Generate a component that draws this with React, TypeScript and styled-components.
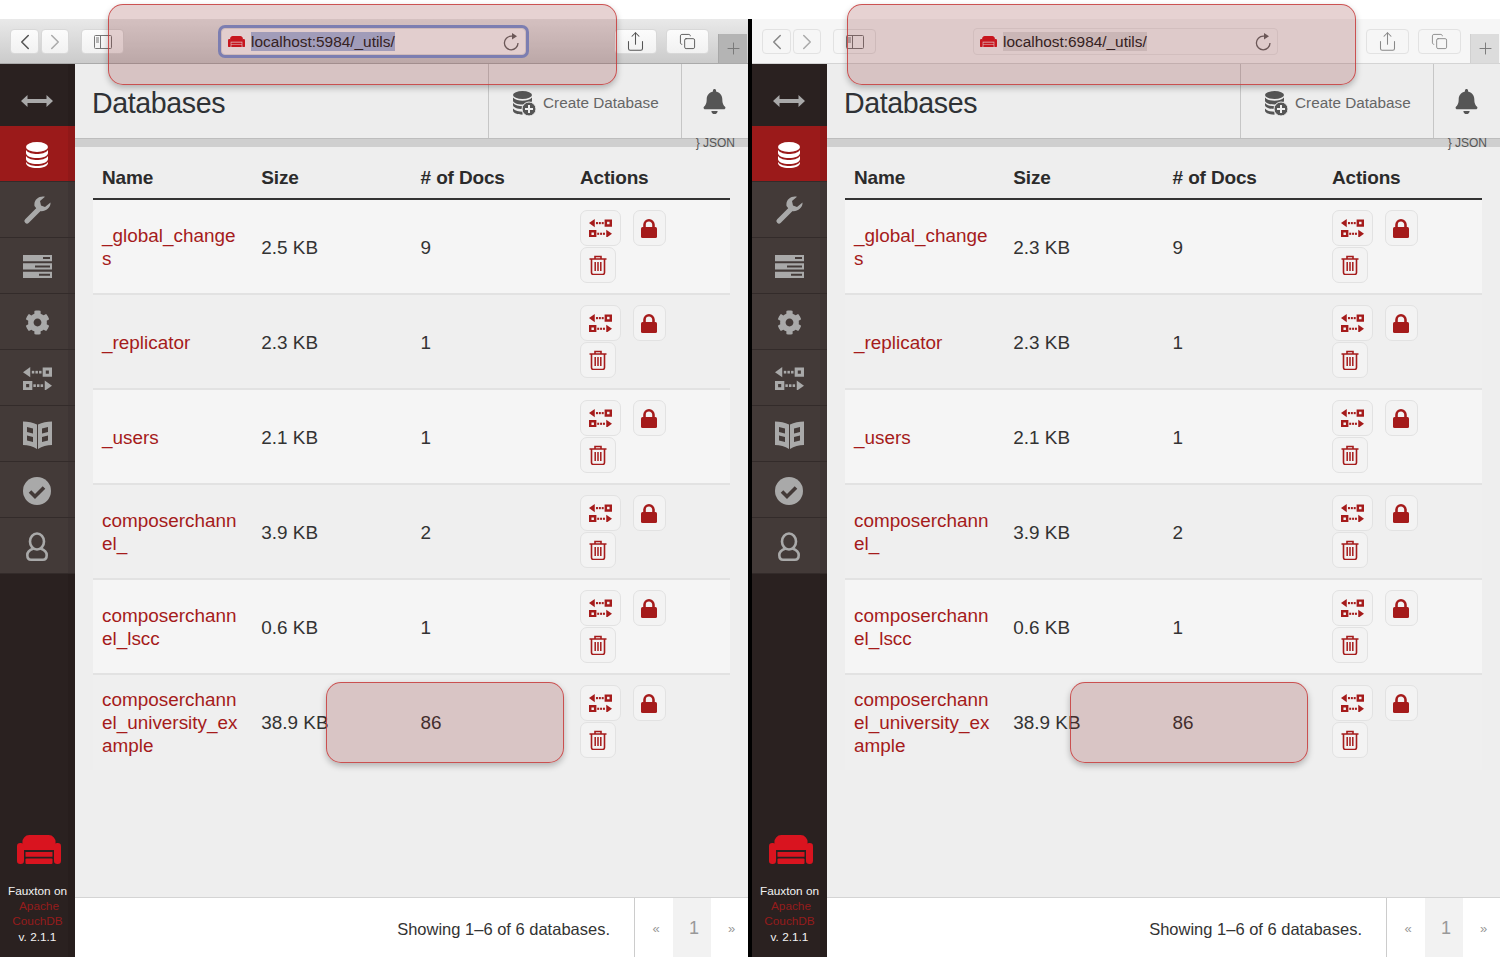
import styled, { createGlobalStyle } from 'styled-components';
import { ChevronLeft, ChevronRight, Copy, Plus, Share } from 'lucide-react';
import { FaBell, FaCog } from 'react-icons/fa';

const GlobalStyle = createGlobalStyle`
  html, body {
    margin: 0;
    background: #fff;
    font-family: "Liberation Sans", Arial, sans-serif;
    overflow: hidden;
  }
`;

const Screen = styled.div`
  display: flex;
  width: 1500px;
  height: 957px;
  overflow: hidden;
`;

const Divider = styled.div`
  width: 4px;
  margin-top: 19px;
  background: #000;
`;

const Window = styled.div`
  position: relative;
  display: flex;
  flex-direction: column;
  width: 748px;
  height: 957px;
  padding-top: 19px;
  box-sizing: border-box;
`;

const Annotation = styled.div<{ $left: number; $top: number; $width: number; $height: number }>`
  position: absolute;
  left: ${(p) => p.$left}px;
  top: ${(p) => p.$top}px;
  width: ${(p) => p.$width}px;
  height: ${(p) => p.$height}px;
  box-sizing: border-box;
  border: 1.5px solid rgba(200, 60, 60, 0.85);
  border-radius: 15px;
  background: rgba(128, 28, 28, 0.2);
  box-shadow: 0 3px 6px rgba(0, 0, 0, 0.25);
`;

const Toolbar = styled.div<{ $active: boolean }>`
  display: flex;
  align-items: flex-start;
  height: 45px;
  flex: none;
  box-sizing: border-box;
  padding: 10px 0 0 10px;
  border-bottom: 1px solid ${(p) => (p.$active ? '#aaa' : '#d4d4d4')};
  background: ${(p) => (p.$active ? 'linear-gradient(#e9e9e9, #cbcbcb)' : '#f6f6f6')};
`;

const ToolButton = styled.div<{ $active: boolean; $width: number; $gap: number }>`
  display: flex;
  align-items: center;
  justify-content: center;
  flex: none;
  width: ${(p) => p.$width}px;
  height: 25px;
  margin-right: ${(p) => p.$gap}px;
  box-sizing: border-box;
  border-radius: 4px;
  color: ${(p) => (p.$active ? '#555' : '#888')};
  background: ${(p) => (p.$active ? 'linear-gradient(#fcfcfc, #f1f1f1)' : '#f6f6f6')};
  border: 1px solid ${(p) => (p.$active ? '#d8d8d8' : '#e2e2e2')};
`;

const UrlBar = styled.div<{ $active: boolean }>`
  display: flex;
  align-items: center;
  flex: none;
  width: 305px;
  height: 27px;
  margin: -1px 88px 0 0;
  padding: 0 5px 0 6px;
  box-sizing: border-box;
  border-radius: 4px;
  background: ${(p) => (p.$active ? '#fafafa' : '#f6f6f6')};
  border: 1px solid ${(p) => (p.$active ? '#e2e2e2' : '#e6e6e6')};
  box-shadow: ${(p) => (p.$active ? '0 0 0 3px #7b97d6' : 'none')};
  gap: 6px;
`;

const UrlText = styled.span<{ $active: boolean }>`
  font-size: 15.4px;
  line-height: 19px;
  color: #222;
  background: ${(p) => (p.$active ? '#a9bce0' : '#dcdcdc')};
`;

const UrlSpacer = styled.div`
  flex: 1;
`;

const NewTab = styled.div<{ $active: boolean }>`
  display: flex;
  align-items: center;
  justify-content: center;
  width: 29px;
  height: 29px;
  margin-top: 5px;
  box-sizing: border-box;
  color: #777;
  background: ${(p) => (p.$active ? '#b4b4b4' : '#dcdcdc')};
  border-left: 1px solid ${(p) => (p.$active ? '#a8a8a8' : '#d0d0d0')};
`;

const Body = styled.div`
  display: flex;
  flex: 1;
  min-height: 0;
`;

const Sidebar = styled.nav`
  display: flex;
  flex-direction: column;
  flex: none;
  width: 75px;
  background: #2a2120;
  box-shadow: inset -7px 0 0 rgba(0, 0, 0, 0.07);
`;

const ToggleRow = styled.div`
  display: flex;
  align-items: center;
  justify-content: center;
  height: 62px;
  flex: none;
  box-sizing: border-box;
  padding: 12px 1px 0 0;
  color: #a9a9a9;
`;

const NavItem = styled.div<{ $active?: boolean }>`
  display: flex;
  align-items: center;
  justify-content: center;
  height: 56px;
  flex: none;
  box-sizing: border-box;
  padding: 2px 1px 0 0;
  border-bottom: 1px solid #332b2a;
  background: ${(p) => (p.$active ? '#9b1a1a' : '#433a38')};
  box-shadow: inset -7px 0 0 rgba(0, 0, 0, 0.07);
  color: #a9a9a9;
`;

const SidebarFoot = styled.div`
  display: flex;
  flex-direction: column;
  align-items: center;
  margin-top: auto;
  padding-bottom: 12px;
`;

const CouchLogo = styled.div`
  display: flex;
  margin: 0 0 20px 3px;
`;

const FootLine = styled.div<{ $red?: boolean; $shift?: number }>`
  font-size: 11.8px;
  line-height: 15.3px;
  color: ${(p) => (p.$red ? '#951c1c' : '#f2f2f2')};
  margin-left: ${(p) => p.$shift ?? 0}px;
`;

const Content = styled.main`
  display: flex;
  flex-direction: column;
  flex: 1;
  min-width: 0;
  background: #eeeeee;
`;

const Header = styled.header`
  display: flex;
  height: 75px;
  flex: none;
  box-sizing: border-box;
  border-bottom: 1px solid #bdbdbd;
  background: #ededed;
`;

const Title = styled.h1`
  flex: 1;
  margin: 0;
  padding: 20px 0 0 17px;
  font-size: 28.6px;
  line-height: 38px;
  font-weight: 400;
  letter-spacing: -0.4px;
  color: #2f3236;
`;

const CreateButton = styled.div`
  display: flex;
  align-items: center;
  width: 193px;
  box-sizing: border-box;
  padding: 4px 0 0 24px;
  gap: 7px;
  border-left: 1px solid #c6c6c6;
  font-size: 15.3px;
  color: #666;
`;

const BellCell = styled.div`
  display: flex;
  align-items: center;
  justify-content: center;
  width: 67px;
  padding: 0 2px 0 0;
  box-sizing: border-box;
  border-left: 1px solid #c6c6c6;
  color: #555;
`;

const JsonStrip = styled.div`
  display: flex;
  align-items: center;
  justify-content: flex-end;
  flex: none;
  height: 8px;
  padding-right: 13px;
  background: #cfcfcf;
  font-size: 12px;
  line-height: 8px;
  color: #555;
`;

const Table = styled.section`
  flex: 1;
  margin: 0 18px 0 18px;
`;

const HeadRow = styled.div`
  display: grid;
  grid-template-columns: repeat(4, 159.3px);
  align-items: center;
  height: 53px;
  box-sizing: border-box;
  padding-top: 10px;
  border-bottom: 2px solid #333;
`;

const HeadCell = styled.div`
  padding-left: 9px;
  font-size: 19px;
  font-weight: 700;
  letter-spacing: -0.15px;
  color: #2b2b2b;
`;

const Row = styled.div<{ $odd: boolean }>`
  display: grid;
  grid-template-columns: repeat(4, 159.3px);
  align-items: center;
  height: 95px;
  box-sizing: border-box;
  padding-top: 2px;
  border-bottom: 2px solid #e2e2e2;
  background: ${(p) => (p.$odd ? '#f5f5f5' : '#efefef')};

  &:last-child {
    border-bottom: none;
    padding-bottom: 2px;
  }
`;

const NameCell = styled.a`
  margin-top: -1px;
  padding: 0 9px;
  font-size: 18.9px;
  line-height: 23px;
  color: #a51b1b;
  word-break: break-all;
`;

const ValueCell = styled.div`
  padding-left: 9px;
  font-size: 18.9px;
  color: #333;
`;

const Actions = styled.div`
  display: grid;
  grid-template-columns: 41px 33px;
  column-gap: 12px;
  row-gap: 1px;
  align-self: start;
  margin-top: -2px;
  padding: 10px 0 0 9px;
`;

const ActionButton = styled.div<{ $width: number }>`
  display: flex;
  align-items: center;
  justify-content: center;
  width: ${(p) => p.$width}px;
  height: 36px;
  box-sizing: border-box;
  border: 1px solid #e2e2e2;
  border-radius: 7px;
  background: #f3f3f3;
  color: #a51b1b;
`;

const Footer = styled.footer`
  display: flex;
  justify-content: flex-end;
  align-items: stretch;
  height: 60px;
  flex: none;
  box-sizing: border-box;
  border-top: 1px solid #d4d4d4;
  background: #fff;
`;

const Showing = styled.div`
  display: flex;
  align-items: center;
  padding: 3px 24px 0 0;
  font-size: 16.5px;
  color: #333;
`;

const Pager = styled.div`
  display: flex;
  border-left: 1px solid #ccc;
`;

const PageCell = styled.div<{ $current?: boolean; $width: number }>`
  display: flex;
  align-items: center;
  justify-content: center;
  width: ${(p) => p.$width}px;
  box-sizing: border-box;
  padding: 1px 0 0 4px;
  font-size: ${(p) => (p.$current ? 18 : 13)}px;
  color: #999;
  background: ${(p) => (p.$current ? '#f2f2f2' : '#fff')};
`;

const CouchGlyph = ({ size = 44 }: { size?: number }) => (
  <svg width={size} height={(size * 29) / 44} viewBox="0 0 44 29" fill="#d9141f">
    <path d="M5.500 8a7 7 0 0 1 7-8h19a7 7 0 0 1 7 8v7H5.500z" />
    <rect x="0" y="8" width="7" height="21" rx="3.200" />
    <rect x="37" y="8" width="7" height="21" rx="3.200" />
    <rect x="8.500" y="17" width="27" height="4.800" rx="0.500" />
    <rect x="8.500" y="23.500" width="27" height="5.500" rx="1" />
  </svg>
);

const DbGlyph = ({ width = 22, color }: { width?: number; color: string }) => (
  <svg width={width} height={(width * 26) / 22} viewBox="0 0 22 26" fill={color}>
    <ellipse cx="11" cy="5" rx="11" ry="5" />
    <path d="M0 8c2 3 7 4 11 4s9-1 11-4v3c0 3-5 5-11 5S0 14 0 11z" />
    <path d="M0 14c2 3 7 4 11 4s9-1 11-4v3c0 3-5 5-11 5S0 20 0 17z" />
    <path d="M0 20c2 3 7 4 11 4s9-1 11-4v1c0 3-5 5-11 5S0 24 0 21z" />
  </svg>
);

const CreateDbGlyph = () => (
  <svg width="23" height="25" viewBox="0 0 23 25" fill="#555">
    <ellipse cx="9.500" cy="4" rx="9.500" ry="4" />
    <path d="M0 6.500c2 2.500 6 3.200 9.500 3.200s7.500-.7 9.500-3.200v3c0 2.500-4.500 4-9.500 4S0 12 0 9.500z" />
    <path d="M0 12c2 2.500 6 3.200 9.500 3.200s7.500-.7 9.500-3.200v2c0 2.500-4.500 4-9.500 4S0 16.500 0 14z" />
    <path d="M0 17.500c2 2.500 6 3.200 9.500 3.200v3C4.500 23.700 0 22 0 19.500z" />
    <circle cx="16" cy="18" r="7" stroke="#eee" strokeWidth="1" />
    <path d="M16 14v8M12 18h8" stroke="#eee" strokeWidth="2" />
  </svg>
);

const ReplicateGlyph = ({ width = 23 }: { width?: number }) => (
  <svg width={width} height={(width * 23) / 28} viewBox="0 0 28 23" fill="currentColor">
    <path d="M0 5l7-5v10z" />
    <rect x="8.500" y="3.700" width="2.400" height="2.600" />
    <rect x="12" y="3.700" width="2.400" height="2.600" />
    <rect x="15.500" y="3.700" width="2.400" height="2.600" />
    <path fillRule="evenodd" d="M19 .5h9v9h-9zM22 3.500v3h3v-3z" />
    <path fillRule="evenodd" d="M0 13.500h9v9H0zM3 16.500v3h3v-3z" />
    <rect x="10" y="16.700" width="2.400" height="2.600" />
    <rect x="13.500" y="16.700" width="2.400" height="2.600" />
    <rect x="17" y="16.700" width="2.400" height="2.600" />
    <path d="M21 13l7 5-7 5z" />
  </svg>
);

const LockGlyph = () => (
  <svg width="16" height="19" viewBox="0 0 16 19" fill="currentColor">
    <path d="M3.500 9V5.800a4.500 4.500 0 0 1 9 0V9" fill="none" stroke="currentColor" strokeWidth="2.600" />
    <rect x="0" y="8" width="16" height="11" rx="1.500" />
  </svg>
);

const TrashGlyph = () => (
  <svg width="18" height="20" viewBox="0 0 18 20" fill="none" stroke="currentColor" strokeWidth="1.600">
    <path d="M.5 4h17M6 4V1.500h6V4" />
    <path d="M2.500 4v13.500a2 2 0 0 0 2 2h9a2 2 0 0 0 2-2V4" />
    <path d="M6.200 7v9M9 7v9M11.800 7v9" strokeWidth="1.500" />
  </svg>
);

const ArrowsGlyph = () => (
  <svg width="32" height="12" viewBox="0 0 32 12" fill="currentColor">
    <path d="M0 6l6.500-6v4h19V0L32 6l-6.500 6V8h-19v4z" />
  </svg>
);

const WrenchGlyph = () => (
  <svg width="28" height="29" viewBox="0 0 28 29" fill="currentColor">
    <path d="M4 25L15.500 13.500" stroke="currentColor" strokeWidth="5.200" strokeLinecap="round" />
    <path d="M27.500 6.500L22 11l-4-1.500L17 5l5-4.200C16.500-.500 10.500 3.500 11.500 10L15 14.500c6 2.500 13-2 12.500-8z" />
  </svg>
);

const RowsGlyph = () => (
  <svg width="29" height="23" viewBox="0 0 29 23" fill="currentColor">
    <path fillRule="evenodd" d="M0 0h29v6.200H0zM20 2v2h7V2z" />
    <path fillRule="evenodd" d="M0 8.300h29v6.200H0zM12 10.400v2h15v-2z" />
    <path fillRule="evenodd" d="M0 16.700h29V23H0zM16 18.800v2h11v-2z" />
  </svg>
);

const BookGlyph = () => (
  <svg width="29" height="29" viewBox="0 0 29 29" fill="currentColor">
    <path
      fillRule="evenodd"
      d="M0 1.500c5 0 10 1 14 3v24.500C10 26.500 5 25 0 25zM29 1.500c-5 0-10 1-14 3v24.500c4-2.500 9-4 14-4zM4 7v5l6 1.500v-5zM4 15.500v5l6 1.500v-5zM25 7v5l-6 1.500v-5zM25 15.500v5l-6 1.500v-5z"
    />
  </svg>
);

const CheckGlyph = () => (
  <svg width="28" height="28" viewBox="0 0 28 28">
    <circle cx="14" cy="14" r="14" fill="currentColor" />
    <path d="M7 14.500l5 5 9-9" fill="none" stroke="#433a38" strokeWidth="3.600" />
  </svg>
);

const UserGlyph = () => (
  <svg width="22" height="29" viewBox="0 0 22 29" fill="none" stroke="currentColor" strokeWidth="2.600">
    <ellipse cx="11" cy="9.500" rx="7" ry="8" />
    <path d="M7.500 16.500C3.500 18 1.300 20 1.300 23c0 3 1.700 4.700 3.700 4.700h12c2 0 3.700-1.700 3.700-4.700 0-3-2.200-5-6.200-6.500" />
  </svg>
);

const ReloadGlyph = () => (
  <svg width="17" height="18" viewBox="0 0 17 18" fill="none" stroke="#666" strokeWidth="1.300">
    <path d="M15 10a6.800 6.800 0 1 1-6.800-6.800H9.500" />
    <path d="M9 0l5 3.200L9 6.400z" fill="#666" stroke="none" />
  </svg>
);

const SidebarPanelGlyph = ({ color }: { color: string }) => (
  <svg width="18" height="14" viewBox="0 0 18 14" fill="none" stroke={color} strokeWidth="1">
    <rect x="0.500" y="0.500" width="17" height="13" rx="1" />
    <path d="M6.500 .5v13M2 3h3M2 5h3M2 7h3" />
  </svg>
);

const databases = [
  { name: '_global_changes', docs: '9' },
  { name: '_replicator', docs: '1' },
  { name: '_users', docs: '1' },
  { name: 'composerchannel_', docs: '2' },
  { name: 'composerchannel_lscc', docs: '1' },
  { name: 'composerchannel_university_example', docs: '86' },
];

const windows = [
  {
    url: 'localhost:5984/_utils/',
    active: true,
    sizes: ['2.5 KB', '2.3 KB', '2.1 KB', '3.9 KB', '0.6 KB', '38.9 KB'],
    topBoxLeft: 108,
    docsBoxLeft: 326,
  },
  {
    url: 'localhost:6984/_utils/',
    active: false,
    sizes: ['2.3 KB', '2.3 KB', '2.1 KB', '3.9 KB', '0.6 KB', '38.9 KB'],
    topBoxLeft: 95,
    docsBoxLeft: 318,
  },
];

type BrowserProps = (typeof windows)[number];

const Browser = ({ url, active, sizes, topBoxLeft, docsBoxLeft }: BrowserProps) => (
  <Window>
    <Toolbar $active={active}>
      <ToolButton $active={active} $width={29} $gap={2}>
        <ChevronLeft size={26} strokeWidth={1.4} />
      </ToolButton>
      <ToolButton $active={active} $width={28} $gap={12}>
        <ChevronRight size={26} strokeWidth={1.4} color="#aaa" />
      </ToolButton>
      <ToolButton $active={active} $width={43} $gap={97}>
        <SidebarPanelGlyph color="#777" />
      </ToolButton>
      <UrlBar $active={active}>
        <CouchGlyph size={17} />
        <UrlText $active={active}>{url}</UrlText>
        <UrlSpacer />
        <ReloadGlyph />
      </UrlBar>
      <ToolButton $active={active} $width={43} $gap={9}>
        <Share size={21} strokeWidth={1.2} />
      </ToolButton>
      <ToolButton $active={active} $width={43} $gap={9}>
        <Copy size={17} strokeWidth={1.3} />
      </ToolButton>
      <NewTab $active={active}>
        <Plus size={19} strokeWidth={1.2} />
      </NewTab>
    </Toolbar>
    <Body>
      <Sidebar>
        <ToggleRow>
          <ArrowsGlyph />
        </ToggleRow>
        <NavItem $active>
          <DbGlyph width={22} color="#fff" />
        </NavItem>
        <NavItem>
          <WrenchGlyph />
        </NavItem>
        <NavItem>
          <RowsGlyph />
        </NavItem>
        <NavItem>
          <FaCog size={25} />
        </NavItem>
        <NavItem>
          <ReplicateGlyph width={29} />
        </NavItem>
        <NavItem>
          <BookGlyph />
        </NavItem>
        <NavItem>
          <CheckGlyph />
        </NavItem>
        <NavItem>
          <UserGlyph />
        </NavItem>
        <SidebarFoot>
          <CouchLogo>
            <CouchGlyph />
          </CouchLogo>
          <FootLine>Fauxton on</FootLine>
          <FootLine $red $shift={3}>
            Apache
          </FootLine>
          <FootLine $red>CouchDB</FootLine>
          <FootLine>v. 2.1.1</FootLine>
        </SidebarFoot>
      </Sidebar>
      <Content>
        <Header>
          <Title>Databases</Title>
          <CreateButton>
            <CreateDbGlyph />
            Create Database
          </CreateButton>
          <BellCell>
            <FaBell size={25} />
          </BellCell>
        </Header>
        <JsonStrip>{'} JSON'}</JsonStrip>
        <Table>
          <HeadRow>
            <HeadCell>Name</HeadCell>
            <HeadCell>Size</HeadCell>
            <HeadCell># of Docs</HeadCell>
            <HeadCell>Actions</HeadCell>
          </HeadRow>
          {databases.map((db, index) => (
            <Row key={db.name} $odd={index % 2 === 0}>
              <NameCell>{db.name}</NameCell>
              <ValueCell>{sizes[index]}</ValueCell>
              <ValueCell>{db.docs}</ValueCell>
              <Actions>
                <ActionButton $width={41}>
                  <ReplicateGlyph />
                </ActionButton>
                <ActionButton $width={33}>
                  <LockGlyph />
                </ActionButton>
                <ActionButton $width={36}>
                  <TrashGlyph />
                </ActionButton>
              </Actions>
            </Row>
          ))}
        </Table>
        <Footer>
          <Showing>Showing 1–6 of 6 databases.</Showing>
          <Pager>
            <PageCell $width={38}>«</PageCell>
            <PageCell $width={38} $current>
              1
            </PageCell>
            <PageCell $width={37}>»</PageCell>
          </Pager>
        </Footer>
      </Content>
    </Body>
    <Annotation $left={topBoxLeft} $top={4} $width={509} $height={81} />
    <Annotation $left={docsBoxLeft} $top={682} $width={238} $height={81} />
  </Window>
);

const App = () => (
  <Screen>
    <GlobalStyle />
    <Browser {...windows[0]} />
    <Divider />
    <Browser {...windows[1]} />
  </Screen>
);

export default App;
